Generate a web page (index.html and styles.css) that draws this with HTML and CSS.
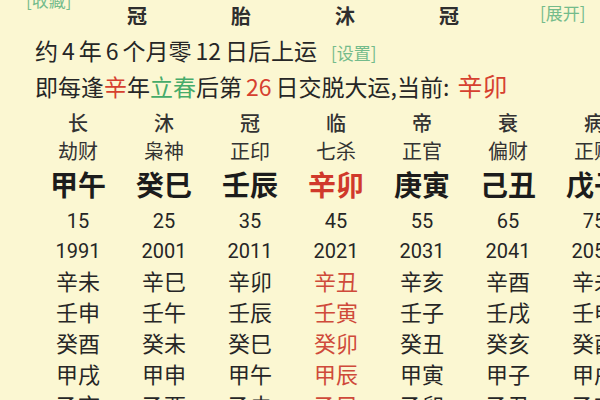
FILE: index.html
```html
<!DOCTYPE html>
<html lang="zh-CN">
<head>
<meta charset="utf-8">
<link rel="stylesheet" href="styles.css">
</head>
<body>
<div class="page">
  <div class="stages">
    <span class="link fav">[收藏]</span>
    <span class="stage">冠</span>
    <span class="stage">胎</span>
    <span class="stage">沐</span>
    <span class="stage">冠</span>
    <span class="link expand">[展开]</span>
  </div>
  <div class="line">约<span class="num">4</span>年<span class="num">6</span>个月零<span class="num">12</span>日后上运<span class="link setting">[设置]</span></div>
  <div class="line">即每逢<span class="red">辛</span>年<span class="green">立春</span>后第<span class="num red">26</span>日交脱大运,当前: <span class="red big-red">辛卯</span></div>

  <div class="table">
    <div class="c s">长</div><div class="c s">沐</div><div class="c s">冠</div><div class="c s">临</div><div class="c s">帝</div><div class="c s">衰</div><div class="c s">病</div>
    <div class="c g">劫财</div><div class="c g">枭神</div><div class="c g">正印</div><div class="c g">七杀</div><div class="c g">正官</div><div class="c g">偏财</div><div class="c g">正财</div>
    <div class="c b">甲午</div><div class="c b">癸巳</div><div class="c b">壬辰</div><div class="c b red">辛卯</div><div class="c b">庚寅</div><div class="c b">己丑</div><div class="c b">戊子</div>
    <div class="c n">15</div><div class="c n">25</div><div class="c n">35</div><div class="c n">45</div><div class="c n">55</div><div class="c n">65</div><div class="c n">75</div>
    <div class="c n">1991</div><div class="c n">2001</div><div class="c n">2011</div><div class="c n">2021</div><div class="c n">2031</div><div class="c n">2041</div><div class="c n">2051</div>
    <div class="c z">辛未</div><div class="c z">辛巳</div><div class="c z">辛卯</div><div class="c z red">辛丑</div><div class="c z">辛亥</div><div class="c z">辛酉</div><div class="c z">辛未</div>
    <div class="c z">壬申</div><div class="c z">壬午</div><div class="c z">壬辰</div><div class="c z red">壬寅</div><div class="c z">壬子</div><div class="c z">壬戌</div><div class="c z">壬申</div>
    <div class="c z">癸酉</div><div class="c z">癸未</div><div class="c z">癸巳</div><div class="c z red">癸卯</div><div class="c z">癸丑</div><div class="c z">癸亥</div><div class="c z">癸酉</div>
    <div class="c z">甲戌</div><div class="c z">甲申</div><div class="c z">甲午</div><div class="c z red">甲辰</div><div class="c z">甲寅</div><div class="c z">甲子</div><div class="c z">甲戌</div>
    <div class="c z">乙亥</div><div class="c z">乙酉</div><div class="c z">乙未</div><div class="c z red">乙巳</div><div class="c z">乙卯</div><div class="c z">乙丑</div><div class="c z">乙亥</div>
  </div>
</div>
</body>
</html>
```
FILE: styles.css
```css
html, body {
  margin: 0;
  padding: 0;
  width: 600px;
  height: 400px;
  overflow: hidden;
  background: #fbf7d2;
}
.page {
  width: 600px;
  height: 400px;
  overflow: hidden;
  font-family: "Noto Sans CJK SC", "Noto Sans", sans-serif;
  color: #262626;
}
.stages {
  display: flex;
  align-items: center;
  height: 30px;
  padding-left: 26px;
}
.link {
  color: #74bb8b;
  font-size: 17px;
}
.fav {
  width: 49px;
  margin-right: 10px;
  align-self: flex-start;
  margin-top: -13px;
}
.stage {
  width: 104px;
  text-align: center;
  font-size: 20px;
  font-weight: 700;
  color: #2e2e2e;
}
.expand {
  margin-left: 39px;
  margin-top: -6px;
}
.line {
  font-size: 23px;
  line-height: 33px;
  padding-left: 35px;
  white-space: nowrap;
}
.stages + .line {
  margin-top: 4px;
}
.num {
  margin: 0 4px;
}
.setting {
  margin-left: 14px;
}
.red { color: #d6402f; }
.green { color: #46ab6a; }
.big-red { font-size: 25px; margin-left: 3px; }
.table {
  display: grid;
  grid-template-columns: repeat(7, 86px);
  grid-template-rows: 28px 28px 40px 33px 27px repeat(5, 31px);
  padding-left: 35px;
  margin-top: 5px;
}
.c {
  display: flex;
  align-items: center;
  justify-content: center;
  white-space: nowrap;
}
.s { font-size: 20px; color: #333; font-weight: 500; }
.g { font-size: 20px; color: #333; }
.b { font-size: 28px; font-weight: 700; color: #1c1c1c; }
.b.red { color: #d0392b; }
.n { font-size: 20px; font-family: Roboto, "Noto Sans", sans-serif; color: #262626; }
.z { font-size: 22px; color: #262626; }
.z.red { color: #cf4a3a; }
```
